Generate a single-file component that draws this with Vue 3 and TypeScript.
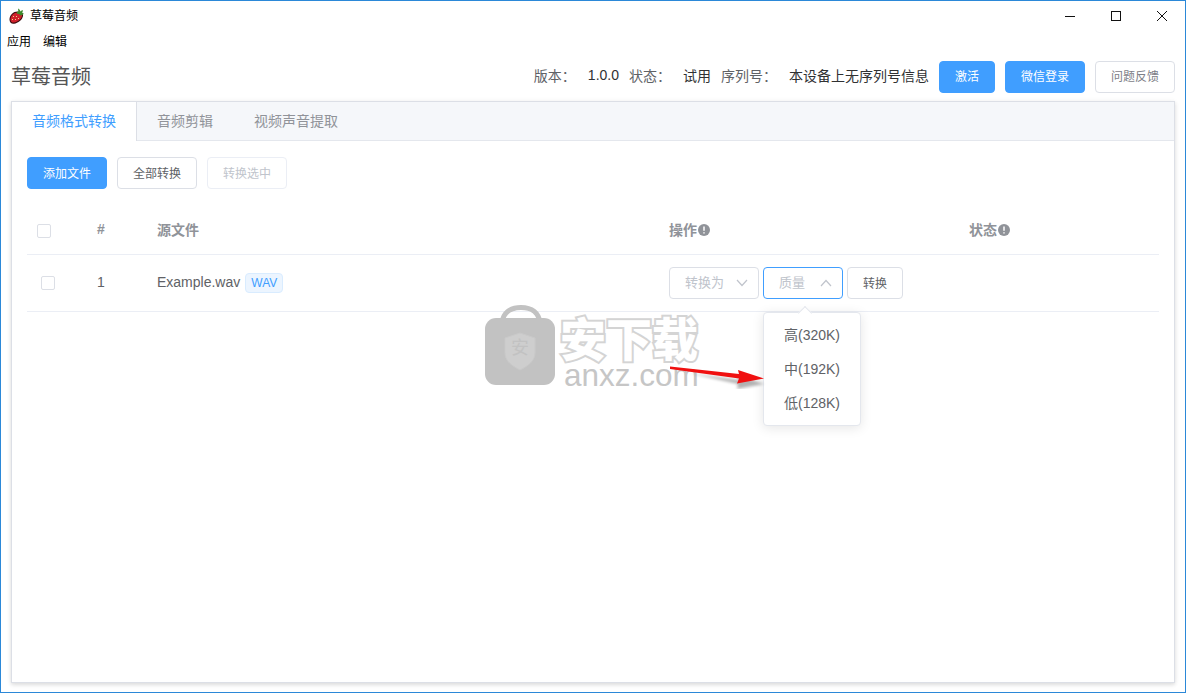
<script setup lang="ts">
import { ref } from 'vue'

const qualities = ['高(320K)', '中(192K)', '低(128K)']
const tabs = ['音频格式转换', '音频剪辑', '视频声音提取']
const activeTab = ref(0)
const qualityOpen = ref(true)
</script>

<template>
  <div class="window">
    <div class="titlebar">
      <svg class="app-icon" viewBox="0 0 16 16" width="16" height="16">
        <path d="M8.500 3.500C4.500 3.500.5 7 .5 11.500c0 3 2 4.500 4.500 4.200 4-.5 8.500-4 9-7.700.2-1.500-.5-3-2-3.500z" fill="#3a0b0e" />
        <path d="M8.500 4.500C5 4.500 1.500 7.500 1.500 11.300c0 2.500 1.500 3.500 3.500 3.300 3.500-.4 7.500-3.500 8-6.800.2-1.300-.5-2.300-1.500-2.600z" fill="#d0202a" />
        <path d="M7.500 5.500c1 .6 2 .5 2.700.2.100 1 1 1.800 2 1.800.4-.6 1.300-1 2.800-1.500-.6-.7-1.200-1-1.800-1.200.5-.8.700-1.700.6-2.800-.9.200-1.700.7-2.300 1.500C11 2 10.300 1.100 9.300.5c-.3 1-.2 2 .1 2.800-.8.300-1.500 1.200-1.900 2.200z" fill="#3c8a2c" />
        <g fill="#f1d08a">
          <rect x="4" y="8" width="1" height="1" />
          <rect x="7" y="8" width="1" height="1" />
          <rect x="3" y="11" width="1" height="1" />
          <rect x="6" y="11" width="1" height="1" />
          <rect x="9" y="10" width="1" height="1" />
        </g>
      </svg>
      <span class="app-name">草莓音频</span>
      <div class="win-controls">
        <span class="win-btn">
          <svg width="12" height="12" viewBox="0 0 12 12"><path d="M1 6.500h10" stroke="#111" fill="none" /></svg>
        </span>
        <span class="win-btn">
          <svg width="12" height="12" viewBox="0 0 12 12"><rect x="1.500" y="1.500" width="9" height="9" stroke="#111" fill="none" /></svg>
        </span>
        <span class="win-btn">
          <svg width="12" height="12" viewBox="0 0 12 12"><path d="M1 1l10 10M11 1L1 11" stroke="#111" fill="none" /></svg>
        </span>
      </div>
    </div>

    <div class="menubar">
      <span>应用</span>
      <span>编辑</span>
    </div>

    <header class="header">
      <h1 class="title">草莓音频</h1>
      <div class="info">
        <span class="label">版本：</span>
        <span class="value">1.0.0</span>
        <span class="label">状态：</span>
        <span class="value">试用</span>
        <span class="label">序列号：</span>
        <span class="value">本设备上无序列号信息</span>
        <button class="btn primary activate">激活</button>
        <button class="btn primary">微信登录</button>
        <button class="btn muted">问题反馈</button>
      </div>
    </header>

    <main class="card">
      <div class="tabs">
        <div
          v-for="(tab, index) in tabs"
          :key="tab"
          :class="['tab', { active: activeTab === index }]"
          @click="activeTab = index"
        >
          {{ tab }}
        </div>
      </div>

      <div class="panel">
        <div class="toolbar">
          <button class="btn primary">添加文件</button>
          <button class="btn">全部转换</button>
          <button class="btn disabled">转换选中</button>
        </div>

        <div class="row head">
          <div class="cell"><span class="checkbox"></span></div>
          <div class="cell text">#</div>
          <div class="cell text">源文件</div>
          <div class="cell text">
            操作
            <svg class="tip" viewBox="0 0 12 12" width="12" height="12">
              <circle cx="6" cy="6" r="6" fill="#909399" />
              <path d="M6 2.500v4.200M6 8.200v1.300" stroke="#fff" stroke-width="1.500" />
            </svg>
          </div>
          <div class="cell text">
            状态
            <svg class="tip" viewBox="0 0 12 12" width="12" height="12">
              <circle cx="6" cy="6" r="6" fill="#909399" />
              <path d="M6 2.500v4.200M6 8.200v1.300" stroke="#fff" stroke-width="1.500" />
            </svg>
          </div>
        </div>

        <div class="row body">
          <div class="cell"><span class="checkbox inset"></span></div>
          <div class="cell text">1</div>
          <div class="cell text">
            Example.wav
            <span class="tag">WAV</span>
          </div>
          <div class="cell actions">
            <div class="select format">
              <span class="select-text">转换为</span>
              <svg width="12" height="8" viewBox="0 0 12 8"><path d="M1 1l5 5.500L11 1" stroke="#c0c4cc" stroke-width="1.200" fill="none" /></svg>
            </div>
            <div :class="['select', 'quality', { open: qualityOpen }]" @click="qualityOpen = !qualityOpen">
              <span class="select-text">质量</span>
              <svg width="12" height="8" viewBox="0 0 12 8"><path d="M1 7l5-5.500L11 7" stroke="#c0c4cc" stroke-width="1.200" fill="none" /></svg>
              <div v-if="qualityOpen" class="dropdown">
                <div v-for="q in qualities" :key="q" class="option">{{ q }}</div>
              </div>
            </div>
            <button class="btn convert">转换</button>
          </div>
          <div class="cell"></div>
        </div>
      </div>
    </main>

    <div class="watermark">
      <svg class="bag" viewBox="0 0 70 80" width="70" height="80">
        <path d="M17 18C18 8 25 2.500 36 2.500s18 5.500 19 15.500" fill="none" stroke="#c2c2c2" stroke-width="5" />
        <rect x="0" y="13" width="70" height="67" rx="11" fill="#c2c2c2" />
        <path d="M35 28l15 5v15c0 8-7 13-15 17-8-4-15-9-15-17V33z" fill="#cecece" stroke="#c9c9c9" />
      </svg>
      <span class="bag-char">安</span>
      <span class="wm-cn">安下载</span>
      <span class="wm-en">anxz.com</span>
    </div>

    <svg class="red-arrow" viewBox="0 0 100 24" width="100" height="24">
      <defs>
        <filter id="arrow-blur" x="-10%" y="-50%" width="120%" height="200%">
          <feGaussianBlur stdDeviation="1.500" />
        </filter>
      </defs>
      <path d="M20 6l50 7-1-5 26 9-27 5 1-5z" fill="#000" opacity=".3" filter="url(#arrow-blur)" transform="translate(0 2)" />
      <path d="M1 1.500l69 7.500-1-4 26 8.500-27 5 2-5L1 4z" fill="#f01010" />
    </svg>
  </div>
</template>

<style>
html,
body {
  margin: 0;
  overflow: hidden;
  background: #fff;
}
</style>

<style scoped>
.window {
  position: relative;
  width: 1186px;
  height: 693px;
  box-sizing: border-box;
  border: 1px solid #2b88d8;
  display: flex;
  flex-direction: column;
  background: #fff;
  font-family: "Liberation Sans", "Noto Sans CJK SC", sans-serif;
  color: #606266;
  overflow: hidden;
}

.titlebar {
  height: 29px;
  flex: none;
  display: flex;
  align-items: center;
  padding-left: 8px;
  color: #000;
  font-size: 12px;
}

.app-icon {
  flex: none;
}

.app-name {
  margin-left: 5px;
  padding-bottom: 2px;
}

.win-controls {
  margin-left: auto;
  display: flex;
  height: 100%;
}

.win-btn {
  width: 46px;
  display: flex;
  align-items: center;
  justify-content: center;
}

.menubar {
  height: 22px;
  flex: none;
  display: flex;
  align-items: center;
  gap: 12px;
  padding-left: 6px;
  padding-bottom: 1px;
  box-sizing: border-box;
  font-size: 12px;
  color: #000;
}

.header {
  height: 49px;
  flex: none;
  display: flex;
  align-items: center;
  justify-content: space-between;
  padding: 0 10px;
}

.title {
  margin: 0;
  padding-bottom: 3px;
  font-size: 20px;
  font-weight: 400;
  color: #555;
}

.info {
  display: flex;
  align-items: center;
  font-size: 14px;
}

.label {
  margin-right: 12px;
  padding-bottom: 3px;
}

.value {
  color: #303133;
  margin-right: 10px;
  padding-bottom: 3px;
}

.btn {
  height: 32px;
  width: 80px;
  box-sizing: border-box;
  padding: 0 0 2px;
  border: 1px solid #dcdfe6;
  border-radius: 4px;
  background: #fff;
  color: #606266;
  font-family: inherit;
  font-size: 12px;
}

.btn.primary {
  background: #409eff;
  border-color: #409eff;
  color: #fff;
}

.btn.muted {
  color: #7d8087;
}

.btn.disabled {
  border-color: #ebeef5;
  color: #c0c4cc;
}

.btn.activate {
  width: 56px;
}

.info .btn + .btn {
  margin-left: 10px;
}

.card {
  flex: 1;
  min-height: 0;
  margin: 0 10px 9px;
  border: 1px solid #dcdfe6;
  box-shadow: 0 2px 4px rgba(0, 0, 0, 0.12), 0 0 6px rgba(0, 0, 0, 0.04);
  display: flex;
  flex-direction: column;
  background: #fff;
}

.tabs {
  height: 38px;
  flex: none;
  display: flex;
  background: #f5f7fa;
  border-bottom: 1px solid #e4e7ed;
  font-size: 14px;
  color: #909399;
}

.tab {
  padding: 0 20px;
  height: 39px;
  box-sizing: border-box;
  line-height: 38px;
  border-right: 1px solid transparent;
  cursor: pointer;
}

.tab.active {
  background: #fff;
  color: #409eff;
  border-right-color: #dcdfe6;
}

.panel {
  padding: 16px 15px 15px;
}

.toolbar {
  display: flex;
  gap: 10px;
  margin-bottom: 18px;
}

.row {
  display: grid;
  grid-template-columns: 60px 60px 512px 300px 1fr;
  align-items: center;
  border-bottom: 1px solid #ebeef5;
  font-size: 14px;
}

.row.head {
  height: 48px;
  box-sizing: border-box;
  color: #909399;
  font-weight: 700;
}

.row.body {
  height: 57px;
  box-sizing: border-box;
}

.cell {
  padding-left: 10px;
  display: flex;
  align-items: center;
}

.cell.text {
  padding-bottom: 2px;
}

.row.head .cell.text {
  padding-bottom: 3px;
}

.tip {
  margin-left: 1px;
  margin-top: 2px;
}

.checkbox {
  width: 14px;
  height: 14px;
  box-sizing: border-box;
  border: 1px solid #dcdfe6;
  border-radius: 2px;
  background: #fff;
}

.checkbox.inset {
  margin-left: 4px;
}

.tag {
  margin-left: 5px;
  margin-top: 2px;
  height: 20px;
  box-sizing: border-box;
  padding: 0 5px;
  line-height: 18px;
  font-size: 12px;
  color: #409eff;
  background: #ecf5ff;
  border: 1px solid #d9ecff;
  border-radius: 4px;
}

.actions {
  gap: 4px;
}

.select {
  position: relative;
  height: 32px;
  box-sizing: border-box;
  border: 1px solid #dcdfe6;
  border-radius: 4px;
  display: flex;
  align-items: center;
  justify-content: space-between;
  padding: 0 10px 0 15px;
  font-size: 13px;
  color: #c0c4cc;
  cursor: pointer;
}

.select-text {
  padding-bottom: 3px;
}

.select.format {
  width: 90px;
}

.select.quality {
  width: 80px;
}

.select.open {
  border-color: #409eff;
}

.btn.convert {
  width: 56px;
}

.dropdown {
  position: absolute;
  left: -1px;
  top: 44px;
  width: 98px;
  box-sizing: border-box;
  padding: 5px 0;
  background: #fff;
  border: 1px solid #e4e7ed;
  border-radius: 4px;
  box-shadow: 0 2px 12px rgba(0, 0, 0, 0.1);
  z-index: 2;
}

.dropdown::before {
  content: "";
  position: absolute;
  left: 36px;
  top: -5px;
  width: 9px;
  height: 9px;
  background: #fff;
  border-left: 1px solid #e4e7ed;
  border-top: 1px solid #e4e7ed;
  transform: rotate(45deg);
}

.option {
  height: 34px;
  line-height: 34px;
  padding-left: 20px;
  font-size: 14px;
  color: #606266;
  white-space: nowrap;
}

.watermark {
  position: absolute;
  left: 484px;
  top: 304px;
  width: 220px;
  height: 82px;
  z-index: 1;
  pointer-events: none;
}

.bag {
  position: absolute;
  left: 0;
  top: 0;
}

.bag-char {
  position: absolute;
  left: 26px;
  top: 31px;
  font-size: 18px;
  line-height: 24px;
  color: #c2c2c2;
}

.wm-cn {
  position: absolute;
  left: 75px;
  top: 16px;
  font-size: 46px;
  line-height: 38px;
  font-weight: 900;
  color: #fff;
  -webkit-text-stroke: 4px #d4d4d4;
  paint-order: stroke fill;
}

.wm-en {
  position: absolute;
  left: 79px;
  top: 57px;
  font-size: 31.500px;
  line-height: 26px;
  color: #c6c6c6;
}

.red-arrow {
  position: absolute;
  left: 668px;
  top: 364px;
  z-index: 3;
  pointer-events: none;
}
</style>
